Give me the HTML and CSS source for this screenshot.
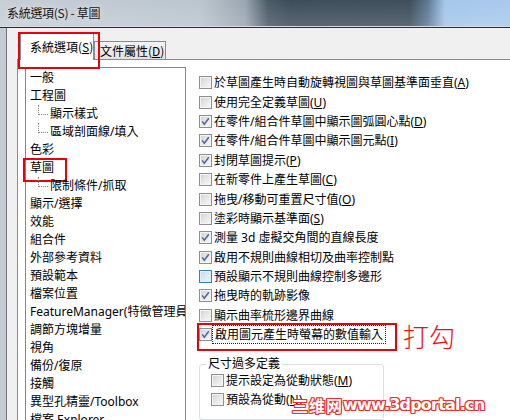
FILE: index.html
```html
<!DOCTYPE html>
<html lang="zh-Hant">
<head>
<meta charset="utf-8">
<title>系統選項 - 草圖</title>
<link rel="stylesheet" href="styles.css">
</head>
<body>
<div class="window">
  <div class="titlebar"><span class="title">系統選項(S) - 草圖</span></div>
  <div class="frame">
    <div class="frame-left"></div>
    <div class="dialog">
      <div class="tabs">
        <div class="tab active">系統選項(<u>S</u>)</div>
        <div class="tab">文件屬性(<u>D</u>)</div>
      </div>
      <div class="panel">
        <ul class="tree">
          <li>一般</li>
          <li>工程圖</li>
          <li class="child"><span class="branch"></span>顯示樣式</li>
          <li class="child"><span class="branch"></span>區域剖面線/填入</li>
          <li>色彩</li>
          <li class="marked">草圖</li>
          <li class="child"><span class="branch"></span>限制條件/抓取</li>
          <li>顯示/選擇</li>
          <li>效能</li>
          <li>組合件</li>
          <li>外部參考資料</li>
          <li>預設範本</li>
          <li>檔案位置</li>
          <li>FeatureManager(特徵管理員)</li>
          <li>調節方塊增量</li>
          <li>視角</li>
          <li>備份/復原</li>
          <li>接觸</li>
          <li>異型孔精靈/Toolbox</li>
          <li>檔案 Explorer</li>
        </ul>
        <div class="options">
          <div class="row"><span class="cb"></span><span class="label">於草圖產生時自動旋轉視圖與草圖基準面垂直(<u>A</u>)</span></div>
          <div class="row"><span class="cb"></span><span class="label">使用完全定義草圖(<u>U</u>)</span></div>
          <div class="row"><span class="cb"><svg viewBox="0 0 11 11"><path d="M2.2 5.4 L4.3 8.2 L8.8 2.2"/></svg></span><span class="label">在零件/組合件草圖中顯示圖弧圓心點(<u>D</u>)</span></div>
          <div class="row"><span class="cb"><svg viewBox="0 0 11 11"><path d="M2.2 5.4 L4.3 8.2 L8.8 2.2"/></svg></span><span class="label">在零件/組合件草圖中顯示圖元點(<u>I</u>)</span></div>
          <div class="row"><span class="cb"><svg viewBox="0 0 11 11"><path d="M2.2 5.4 L4.3 8.2 L8.8 2.2"/></svg></span><span class="label">封閉草圖提示(<u>P</u>)</span></div>
          <div class="row"><span class="cb"></span><span class="label">在新零件上產生草圖(<u>C</u>)</span></div>
          <div class="row"><span class="cb"></span><span class="label">拖曳/移動可重置尺寸值(<u>O</u>)</span></div>
          <div class="row"><span class="cb"></span><span class="label">塗彩時顯示基準面(<u>S</u>)</span></div>
          <div class="row"><span class="cb"><svg viewBox="0 0 11 11"><path d="M2.2 5.4 L4.3 8.2 L8.8 2.2"/></svg></span><span class="label">測量 3d 虛擬交角間的直線長度</span></div>
          <div class="row"><span class="cb"><svg viewBox="0 0 11 11"><path d="M2.2 5.4 L4.3 8.2 L8.8 2.2"/></svg></span><span class="label">啟用不規則曲線相切及曲率控制點</span></div>
          <div class="row"><span class="cb hover"></span><span class="label">預設顯示不規則曲線控制多邊形</span></div>
          <div class="row"><span class="cb"><svg viewBox="0 0 11 11"><path d="M2.2 5.4 L4.3 8.2 L8.8 2.2"/></svg></span><span class="label">拖曳時的軌跡影像</span></div>
          <div class="row"><span class="cb"></span><span class="label">顯示曲率梳形邊界曲線</span></div>
          <div class="row marked"><span class="cb"><svg viewBox="0 0 11 11"><path d="M2.2 5.4 L4.3 8.2 L8.8 2.2"/></svg></span><span class="label focus">啟用圖元產生時螢幕的數值輸入</span><span class="note">打勾</span></div>
          <fieldset class="group">
            <legend>尺寸過多定義</legend>
            <div class="row"><span class="cb"></span><span class="label">提示設定為從動狀態(<u>M</u>)</span></div>
            <div class="row"><span class="cb"></span><span class="label">預設為從動(<u>N</u>)</span></div>
          </fieldset>
        </div>
      </div>
    </div>
  </div>
  <div class="watermark"><span class="wm-cn">三维网</span>www.3dportal.cn</div>
</div>
</body>
</html>
```

FILE: styles.css
```css
* { box-sizing: border-box; }
html, body { margin: 0; padding: 0; }
body {
  width: 510px;
  height: 420px;
  overflow: hidden;
  background: #f0f0f0;
  font-family: "Noto Sans", "Noto Sans CJK TC", sans-serif;
  font-size: 12px;
  color: #000;
}
.window {
  position: relative;
  width: 510px;
  height: 420px;
  display: flex;
  flex-direction: column;
  overflow: hidden;
}
.titlebar {
  flex: none;
  height: 27px;
  display: flex;
  align-items: center;
  padding-left: 7px;
  border-bottom: 1px solid #d6dce2;
  background:
    linear-gradient(to bottom, rgba(255,255,255,0) 0, rgba(255,255,255,0.15) 100%),
    linear-gradient(to right, #c6ced6 0, #bbc5ce 200px, #9aa6b1 245px, #4b5a67 268px, #3e4d5b 290px, #3f4e5c 410px, #5f7a96 428px, #a5c6ea 445px, #a8c8ec 510px);
}
.title {
  font-family: "Noto Sans CJK TC", sans-serif;
  font-size: 12px;
  line-height: 16px;
  letter-spacing: -0.3px;
  color: #151515;
  text-shadow: 0 0 6px rgba(255,255,255,0.7);
}
.frame {
  flex: 1;
  min-height: 0;
  display: flex;
  border-top: 1px solid #2e2e2e;
}
.frame-left {
  flex: none;
  width: 7px;
  background: #c3cbd3;
  border-right: 1px solid #707478;
}
.dialog {
  flex: 1;
  min-width: 0;
  display: flex;
  flex-direction: column;
  padding-left: 10px;
  background: #f0f0f0;
}
.tabs {
  flex: none;
  height: 31px;
  display: flex;
  align-items: flex-end;
  padding-left: 3px;
  position: relative;
  z-index: 1;
}
.tab {
  height: 18px;
  width: 72px;
  padding-left: 5px;
  display: flex;
  align-items: center;
  border: 1px solid #898c95;
  border-bottom: none;
  background: linear-gradient(to bottom, #f3f3f3, #e3e3e3);
  font-family: "Noto Sans CJK TC", sans-serif;
  line-height: 16px;
  white-space: nowrap;
}
.tab.active {
  position: relative;
  height: 27px;
  width: 74px;
  padding-left: 9px;
  margin-bottom: -1px;
  background: #fff;
}
.tab.active::after {
  content: "";
  position: absolute;
  left: -3px;
  top: -2px;
  width: 78px;
  height: 33px;
  border: 2px solid #e8000b;
}
.panel {
  flex: 1;
  min-height: 0;
  display: flex;
  gap: 13px;
  padding: 7px 0 0 7px;
  background: #fff;
  border-top: 1px solid #898c95;
  border-left: 1px solid #898c95;
  overflow: hidden;
}
.tree {
  flex: none;
  width: 161px;
  height: 380px;
  margin: 0;
  padding: 1px 0 0 0;
  list-style: none;
  border: 1px solid #828790;
}
.tree li {
  position: relative;
  height: 18px;
  display: flex;
  align-items: center;
  padding-left: 4px;
  line-height: 16px;
  white-space: nowrap;
  overflow: hidden;
}
.tree li.child { padding-left: 12px; }
.branch {
  flex: none;
  align-self: flex-start;
  width: 10px;
  height: 10px;
  margin-right: 2px;
  border-left: 1px dotted #8c8c8c;
  border-bottom: 1px dotted #8c8c8c;
}
.tree li.marked { overflow: visible; }
.tree li.marked::after {
  content: "";
  position: absolute;
  left: -3px;
  top: -1px;
  width: 40px;
  height: 20px;
  border: 2px solid #e8000b;
}
.options {
  flex: none;
  padding-top: 6px;
}
.row {
  position: relative;
  height: 19.4px;
  display: flex;
  align-items: center;
  white-space: nowrap;
}
.cb {
  flex: none;
  width: 13px;
  height: 13px;
  border: 1px solid #8e8f8f;
  background: linear-gradient(135deg, #cfd1d4 0, #e9e9e9 55%, #f7f7f7 100%);
  box-shadow: inset 0 0 0 1px #f4f4f4;
}
.cb svg {
  display: block;
  width: 11px;
  height: 11px;
}
.cb path {
  fill: none;
  stroke: #51649a;
  stroke-width: 1.5;
}
.cb.hover {
  border-color: #3c7fb1;
  background: linear-gradient(135deg, #b9dcf3 0, #d9effc 60%, #e8f5fd 100%);
  box-shadow: inset 0 0 0 1px #def0fc;
}
.label {
  margin-left: 2px;
  font-size: 12px;
  line-height: 15px;
}
.label.focus {
  padding: 0 1px;
  outline: 1px dotted #222;
  outline-offset: 1px;
}
.row.marked::after {
  content: "";
  position: absolute;
  left: -2px;
  top: -2px;
  width: 196px;
  height: 24px;
  border: 2px solid #e8000b;
}
.note {
  position: absolute;
  left: 204px;
  top: -3px;
  font-family: "Noto Sans CJK TC", sans-serif;
  font-size: 26px;
  font-weight: 300;
  line-height: 28px;
  color: #ee1111;
}
.group {
  width: 185px;
  margin: 11px 0 0 0;
  padding: 0 0 10px 11px;
  border: 1px solid #d5dfe5;
  border-radius: 3px;
}
.group legend {
  margin-left: -5px;
  margin-bottom: -3px;
  padding: 0 2px;
  line-height: 18px;
  font-size: 12px;
}
.watermark {
  position: absolute;
  left: 292px;
  top: 396px;
  z-index: 5;
  display: flex;
  align-items: center;
  font-family: "DejaVu Sans", sans-serif;
  font-weight: bold;
  font-size: 16px;
  line-height: 18px;
  letter-spacing: -0.8px;
  color: #fff;
  text-shadow:
    1px 0 0 #f03030, -1px 0 0 #f03030, 0 1px 0 #f03030, 0 -1px 0 #f03030,
    1px 1px 0 #f03030, -1px -1px 0 #f03030, 1px -1px 0 #f03030, -1px 1px 0 #f03030;
}
.wm-cn {
  font-family: "Noto Sans CJK SC", sans-serif;
  font-size: 16px;
  letter-spacing: 1px;
}
```
